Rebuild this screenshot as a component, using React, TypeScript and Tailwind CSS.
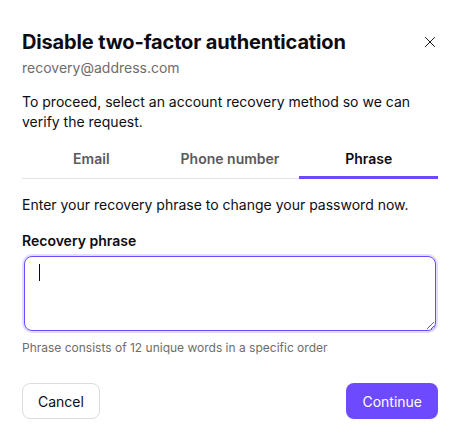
import { useState } from "react";

const TABS = ["Email", "Phone number", "Phrase"];

export default function App() {
  const [active, setActive] = useState(2);

  return (
    <div className="w-[459px] h-[437px] bg-white pl-[22px] pr-[21px] pt-[28px] font-['Inter','Liberation_Sans',sans-serif] text-[#0c0c14]">
      {/* Header */}
      <div className="flex items-start justify-between">
        <div>
          <h1 className="text-[20px] leading-[28px] font-bold tracking-[-0.15px]">
            Disable two-factor authentication
          </h1>
          <p className="text-[14px] leading-[20px] text-[#6f6c6a] mt-[2px]">recovery@address.com</p>
        </div>
        <button className="mt-[7px] mr-[1px] text-[#0c0c14]" aria-label="Close">
          <svg viewBox="0 0 16 16" className="w-[14px] h-[14px]" fill="none" stroke="currentColor" strokeWidth="1.1">
            <path d="M2.5 2.5l11 11M13.5 2.5l-11 11" />
          </svg>
        </button>
      </div>

      <p className="text-[14px] leading-[20px] mt-[14px]">
        To proceed, select an account recovery method so we can verify the request.
      </p>

      {/* Tabs */}
      <div className="mt-[9px] grid grid-cols-3 border-b border-[#e5e3e1]">
        {TABS.map((tab, i) => (
          <button
            key={tab}
            onClick={() => setActive(i)}
            className={`relative pt-[8px] pb-[9px] text-[14px] leading-[20px] font-semibold ${
              i === active ? "text-[#0c0c14]" : "text-[#5c5958]"
            }`}
          >
            {tab}
            {i === active && (
              <span className="absolute left-0 right-0 -bottom-[1px] h-[3px] bg-[#6d4aff]" />
            )}
          </button>
        ))}
      </div>

      <p className="text-[14px] leading-[20px] mt-[16px]">
        Enter your recovery phrase to change your password now.
      </p>

      <label className="block text-[14px] leading-[20px] font-semibold mt-[16px]">Recovery phrase</label>

      {/* Textarea with focus ring */}
      <div className="mt-[3px] rounded-[10px] bg-[#e3ddff] p-[2px]">
        <div className="relative">
          <textarea className="block w-full h-[75px] rounded-[8px] border border-[#6d4aff] bg-white px-[14px] py-[8px] text-[14px] outline-none" />
          <span className="absolute left-[15px] top-[8px] w-[1px] h-[17px] bg-[#0c0c14]" />
        </div>
      </div>

      <p className="text-[12px] leading-[16px] text-[#6f6c6a] mt-[7px]">
        Phrase consists of 12 unique words in a specific order
      </p>

      {/* Footer */}
      <div className="mt-[27px] flex items-center justify-between">
        <button className="h-[36px] px-[15px] rounded-[8px] border border-[#dedbd9] text-[14px] text-[#0c0c14]">
          Cancel
        </button>
        <button className="h-[36px] px-[16px] rounded-[8px] bg-[#6d4aff] text-[14px] text-white">
          Continue
        </button>
      </div>
    </div>
  );
}
